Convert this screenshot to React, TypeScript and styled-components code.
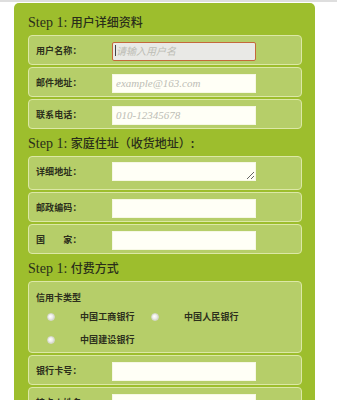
import React from "react";
import styled, { createGlobalStyle } from "styled-components";

const Global = createGlobalStyle`
  html, body { margin: 0; padding: 0; background: #ffffff; }
  body { border-top: 2px solid #dedede; overflow: hidden; }
`;

const Panel = styled.form`
  margin: 1px 0 0 14px;
  width: 301px;
  box-sizing: border-box;
  background: #9dbe2d;
  border-radius: 5px 5px 0 0;
  padding: 7px 13px 10px 14px;
  display: flex;
  flex-direction: column;
  gap: 2px;
`;

const Heading = styled.h2`
  margin: 0;
  height: 23px;
  line-height: 23px;
  font-family: "Liberation Serif", "Noto Sans CJK SC", serif;
  font-weight: normal;
  font-size: 14px;
  color: #2a2e1a;
  white-space: nowrap;
`;

const Cn = styled.span`
  font-family: "Noto Sans CJK SC", sans-serif;
  font-size: 12px;
  font-weight: 500;
`;

const Row = styled.div<{ $h?: number }>`
  box-sizing: border-box;
  height: ${(p) => p.$h ?? 30}px;
  background: #b6ce69;
  border: 1px solid #dce8a6;
  border-radius: 4px;
  display: flex;
  align-items: flex-start;
  padding: 5px 0 0 7px;
`;

const Label = styled.label`
  width: 76px;
  flex: none;
  height: 19px;
  line-height: 19px;
  font-family: "Noto Sans CJK SC", sans-serif;
  font-weight: bold;
  font-size: 9px;
  letter-spacing: 0.1px;
  color: #2c2f1c;
  white-space: nowrap;
`;

const Field = styled.div`
  position: relative;
  width: 144px;
  height: 19px;
`;

const Input = styled.input<{ $active?: boolean }>`
  box-sizing: border-box;
  width: 144px;
  height: 19px;
  margin: 0;
  padding: 0 3px;
  border: 1px solid ${(p) => (p.$active ? "#c4693b" : "#f6f8e4")};
  border-radius: ${(p) => (p.$active ? "2px" : "0")};
  background: ${(p) => (p.$active ? "#e9e9e6" : "#fffff6")};
  outline: none;
  font-family: "Liberation Serif", serif;
  font-size: 11px;
  font-style: italic;
  color: #333;
  &::placeholder {
    color: #bdbdb5;
    font-family: ${(p) => (p.$active ? `"Noto Sans CJK SC", sans-serif` : `"Liberation Serif", serif`)};
    font-size: ${(p) => (p.$active ? "10px" : "11px")};
  }
`;

const Caret = styled.span`
  position: absolute;
  left: 3px;
  top: 4px;
  width: 1px;
  height: 11px;
  background: #444;
`;

const TextArea = styled.textarea`
  box-sizing: border-box;
  width: 144px;
  height: 19px;
  margin: 0;
  padding: 0 3px;
  border: 1px solid #f6f8e4;
  background: #fffff6;
  outline: none;
  resize: both;
  font-family: "Liberation Sans", sans-serif;
  font-size: 11px;
  display: block;
`;

const RadioBox = styled.div`
  box-sizing: border-box;
  height: 72px;
  background: #b6ce69;
  border: 1px solid #dce8a6;
  border-radius: 4px;
  padding: 9px 0 0 7px;
  display: flex;
  flex-direction: column;
`;

const GroupTitle = styled.div`
  height: 14px;
  line-height: 14px;
  font-family: "Noto Sans CJK SC", sans-serif;
  font-weight: bold;
  font-size: 9px;
  color: #2c2f1c;
  margin-bottom: 0;
`;

const RadioGrid = styled.div`
  display: grid;
  grid-template-columns: 104px 104px;
  grid-auto-rows: 23px;
  padding-left: 11px;
`;

const Option = styled.label`
  display: flex;
  align-items: center;
  height: 23px;
  font-family: "Noto Sans CJK SC", sans-serif;
  font-weight: bold;
  font-size: 9px;
  letter-spacing: 0.1px;
  color: #2c2f1c;
  white-space: nowrap;
`;

const Radio = styled.input`
  appearance: none;
  -webkit-appearance: none;
  margin: 0 25px 0 0;
  width: 8px;
  height: 8px;
  border-radius: 50%;
  border: 1px solid #d6d8cc;
  background: radial-gradient(circle at 40% 40%, #ffffff 0%, #eeeeea 45%, #c9cbc2 100%);
  flex: none;
`;

export default function App() {
  return (
    <>
      <Global />
      <Panel>
        <Heading>
          Step 1: <Cn>用户详细资料</Cn>
        </Heading>
        <Row>
          <Label>用户名称：</Label>
          <Field>
            <Input $active placeholder="请输入用户名" />
            <Caret />
          </Field>
        </Row>
        <Row>
          <Label>邮件地址：</Label>
          <Field>
            <Input placeholder="example@163.com" />
          </Field>
        </Row>
        <Row>
          <Label>联系电话：</Label>
          <Field>
            <Input placeholder="010-12345678" />
          </Field>
        </Row>

        <Heading>
          Step 1: <Cn>家庭住址（收货地址）:</Cn>
        </Heading>
        <Row $h={34}>
          <Label>详细地址：</Label>
          <Field>
            <TextArea />
          </Field>
        </Row>
        <Row>
          <Label>邮政编码：</Label>
          <Field>
            <Input />
          </Field>
        </Row>
        <Row>
          <Label>国{"\u2003\u2003"}家：</Label>
          <Field>
            <Input />
          </Field>
        </Row>

        <Heading>
          Step 1: <Cn>付费方式</Cn>
        </Heading>
        <RadioBox>
          <GroupTitle>信用卡类型</GroupTitle>
          <RadioGrid>
            <Option>
              <Radio type="radio" name="bank" />
              中国工商银行
            </Option>
            <Option>
              <Radio type="radio" name="bank" />
              中国人民银行
            </Option>
            <Option>
              <Radio type="radio" name="bank" />
              中国建设银行
            </Option>
          </RadioGrid>
        </RadioBox>
        <Row>
          <Label>银行卡号：</Label>
          <Field>
            <Input />
          </Field>
        </Row>
        <Row>
          <Label>持卡人姓名：</Label>
          <Field>
            <Input />
          </Field>
        </Row>
      </Panel>
    </>
  );
}
